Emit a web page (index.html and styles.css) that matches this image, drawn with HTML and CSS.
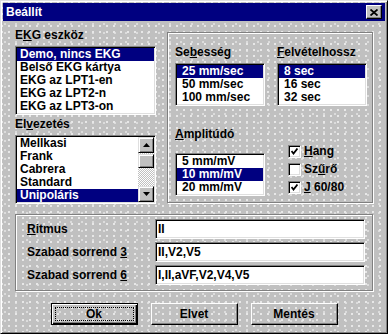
FILE: index.html
```html
<!DOCTYPE html>
<html>
<head>
    <title>Beállít</title>
    <link rel="stylesheet" href="styles.css">
</head>
<body>
    <div class="window">
        <div class="titlebar">
            <span class="title">Beállít</span>
            <div class="close-btn">
                <svg width="8" height="7" viewBox="0 0 8 7">
                    <path d="M0.5 0.5 L7.5 6.5 M7.5 0.5 L0.5 6.5" stroke="#000" stroke-width="1.8"/>
                </svg>
            </div>
        </div>

        <div class="dialog-body">
            <div class="top-section">
                <!-- left column: device and lead lists -->
                <div class="left-col">
                    <div class="label">E<u>K</u>G eszköz</div>
                    <div class="listbox ekg-list">
                        <div class="item selected">Demo, nincs EKG</div>
                        <div class="item">Belső EKG kártya</div>
                        <div class="item">EKG az LPT1-en</div>
                        <div class="item">EKG az LPT2-n</div>
                        <div class="item">EKG az LPT3-on</div>
                    </div>

                    <div class="label label-lead">El<u>v</u>ezetés</div>
                    <div class="listbox lead-list">
                        <div class="items">
                            <div class="item">Mellkasi</div>
                            <div class="item">Frank</div>
                            <div class="item">Cabrera</div>
                            <div class="item">Standard</div>
                            <div class="item selected">Unipoláris</div>
                        </div>
                        <div class="scrollbar">
                            <div class="sb-btn">
                                <svg width="7" height="4" viewBox="0 0 7 4"><polygon points="0,4 3.5,0 7,4" fill="#000"/></svg>
                            </div>
                            <div class="sb-thumb"></div>
                            <div class="sb-track"></div>
                            <div class="sb-btn">
                                <svg width="7" height="4" viewBox="0 0 7 4"><polygon points="0,0 7,0 3.5,4" fill="#000"/></svg>
                            </div>
                        </div>
                    </div>
                </div>

                <!-- right group: recording settings -->
                <div class="group settings">
                    <div class="settings-row">
                        <div class="col">
                            <div class="label">Se<u>b</u>esség</div>
                            <div class="listbox small-list">
                                <div class="item selected">25 mm/sec</div>
                                <div class="item">50 mm/sec</div>
                                <div class="item">100 mm/sec</div>
                            </div>
                        </div>
                        <div class="col">
                            <div class="label"><u>F</u>elvételhossz</div>
                            <div class="listbox small-list">
                                <div class="item selected">8 sec</div>
                                <div class="item">16 sec</div>
                                <div class="item">32 sec</div>
                            </div>
                        </div>
                    </div>
                    <div class="settings-row amp-row">
                        <div class="col">
                            <div class="label amp-label"><u>A</u>mplitúdó</div>
                            <div class="listbox small-list">
                                <div class="item">5 mm/mV</div>
                                <div class="item selected">10 mm/mV</div>
                                <div class="item">20 mm/mV</div>
                            </div>
                        </div>
                        <div class="checks">
                            <div class="check">
                                <span class="checkbox">
                                    <svg width="7" height="7" viewBox="0 0 7 7"><path d="M0.5 3 L2.5 5.5 L6.5 0.5" stroke="#000" stroke-width="1.8" fill="none"/></svg>
                                </span>
                                <span><u>H</u>ang</span>
                            </div>
                            <div class="check">
                                <span class="checkbox"></span>
                                <span>Sz<u>ű</u>rő</span>
                            </div>
                            <div class="check">
                                <span class="checkbox">
                                    <svg width="7" height="7" viewBox="0 0 7 7"><path d="M0.5 3 L2.5 5.5 L6.5 0.5" stroke="#000" stroke-width="1.8" fill="none"/></svg>
                                </span>
                                <span><u>J</u> 60/80</span>
                            </div>
                        </div>
                    </div>
                </div>
            </div>

            <!-- lead order fields -->
            <div class="group leads">
                <div class="field">
                    <span class="field-label"><u>R</u>itmus</span>
                    <span class="edit">II</span>
                </div>
                <div class="field">
                    <span class="field-label">Szabad sorrend <u>3</u></span>
                    <span class="edit">II,V2,V5</span>
                </div>
                <div class="field">
                    <span class="field-label">Szabad sorrend <u>6</u></span>
                    <span class="edit">I,II,aVF,V2,V4,V5</span>
                </div>
            </div>

            <div class="buttons">
                <div class="btn default"><span class="focus">Ok</span></div>
                <div class="btn">Elvet</div>
                <div class="btn">Mentés</div>
            </div>
        </div>
    </div>
</body>
</html>
```

FILE: styles.css
```css
body {
    margin: 0;
    background: #c0c0c0;
    font-family: "Liberation Sans", Arial, sans-serif;
    font-size: 12px;
    font-weight: bold;
    color: #000;
}

u {
    text-decoration-thickness: 1px;
    text-underline-offset: 1px;
}

/* window frame with speckled dialog background */
.window {
    width: 388px;
    height: 334px;
    box-sizing: border-box;
    border: 1px solid;
    border-color: #dfdfdf #000 #000 #dfdfdf;
    box-shadow: inset 1px 1px #fff, inset -1px -1px #808080;
    padding: 2px;
    display: flex;
    flex-direction: column;
    background-color: #c0c0c0;
    background-image:
        radial-gradient(circle at 1px 1px, #e8e8e8 0.7px, transparent 1px),
        radial-gradient(circle at 1px 1px, #dcdcdc 0.7px, transparent 1px);
    background-size: 7px 6px, 11px 9px;
    background-position: 0 0, 3px 4px;
}

.titlebar {
    height: 18px;
    flex: none;
    background: #000080;
    color: #fff;
    display: flex;
    align-items: center;
    justify-content: space-between;
    padding: 0 3px 0 3px;
}

.title {
    font-size: 12px;
}

.close-btn {
    width: 16px;
    height: 14px;
    box-sizing: border-box;
    background: #c0c0c0;
    border: 1px solid;
    border-color: #fff #000 #000 #fff;
    box-shadow: inset -1px -1px #808080;
    display: flex;
    align-items: center;
    justify-content: center;
}

.dialog-body {
    padding: 8px 12px 0 12px;
    display: flex;
    flex-direction: column;
}

.top-section {
    display: flex;
    gap: 11px;
}

.left-col {
    width: 141px;
    display: flex;
    flex-direction: column;
}

.label {
    height: 13px;
    line-height: 13px;
    margin-bottom: 4px;
    white-space: nowrap;
}

.label-lead {
    margin-top: 3px;
}

/* sunken list boxes */
.listbox {
    background: #fff;
    border: 1px solid;
    border-color: #808080 #fff #fff #808080;
    box-shadow: inset 1px 1px #000, inset -1px -1px #dfdfdf;
    padding: 1px;
}

.item {
    height: 13px;
    line-height: 13px;
    padding-left: 3px;
    white-space: nowrap;
}

.item.selected {
    background: #000080;
    color: #fff;
}

.lead-list {
    display: flex;
}

.lead-list .items {
    flex: 1;
}

.scrollbar {
    width: 16px;
    display: flex;
    flex-direction: column;
    background: repeating-conic-gradient(#fff 0 25%, #c0c0c0 0 50%) 0 0 / 2px 2px;
}

.sb-btn,
.sb-thumb {
    box-sizing: border-box;
    background: #c0c0c0;
    border: 1px solid;
    border-color: #dfdfdf #000 #000 #dfdfdf;
    box-shadow: inset 1px 1px #fff, inset -1px -1px #808080;
}

.sb-btn {
    height: 16px;
    display: flex;
    align-items: center;
    justify-content: center;
}

.sb-thumb {
    height: 14px;
    margin-top: 1px;
}

.sb-track {
    flex: 1;
}

/* etched group frames */
.group {
    border: 1px solid #808080;
    box-shadow: inset 1px 1px #fff, 1px 1px #fff;
}

.settings {
    width: 206px;
    height: 171px;
    box-sizing: border-box;
    margin-top: 3px;
    padding: 13px 5px 0 7px;
}

.settings-row {
    display: flex;
    gap: 12px;
}

.col {
    width: 90px;
}

.small-list .item {
    padding-left: 5px;
}

.amp-row {
    margin-top: 22px;
}

.amp-label {
    margin-bottom: 12px;
}

.checks {
    padding-top: 14px;
    margin-left: 11px;
}

.check {
    height: 18px;
    display: flex;
    align-items: center;
    gap: 3px;
}

.checkbox {
    width: 13px;
    height: 13px;
    box-sizing: border-box;
    background: #fff;
    border: 1px solid;
    border-color: #808080 #fff #fff #808080;
    box-shadow: inset 1px 1px #000, inset -1px -1px #dfdfdf;
    display: flex;
    align-items: center;
    justify-content: center;
}

.leads {
    margin-top: 10px;
    padding: 4px 7px 5px 11px;
    display: flex;
    flex-direction: column;
    gap: 3px;
}

.field {
    display: flex;
    align-items: center;
}

.field-label {
    width: 128px;
    white-space: nowrap;
}

.edit {
    flex: 1;
    height: 20px;
    box-sizing: border-box;
    background: #fff;
    border: 1px solid;
    border-color: #808080 #fff #fff #808080;
    box-shadow: inset 1px 1px #000, inset -1px -1px #dfdfdf;
    line-height: 18px;
    padding-left: 2px;
}

/* push buttons */
.buttons {
    margin-top: 12px;
    display: flex;
    justify-content: center;
    gap: 13px;
}

.btn {
    width: 87px;
    height: 22px;
    box-sizing: border-box;
    border: 1px solid;
    border-color: #fff #000 #000 #fff;
    box-shadow: inset -1px -1px #808080;
    display: flex;
    align-items: center;
    justify-content: center;
}

.btn.default {
    border-color: #000;
    box-shadow: inset 1px 1px #fff, inset -1px -1px #000, inset -2px -2px #808080;
    padding: 3px;
}

.focus {
    flex: 1;
    align-self: stretch;
    display: flex;
    align-items: center;
    justify-content: center;
    border: 1px dotted #000;
}
```
